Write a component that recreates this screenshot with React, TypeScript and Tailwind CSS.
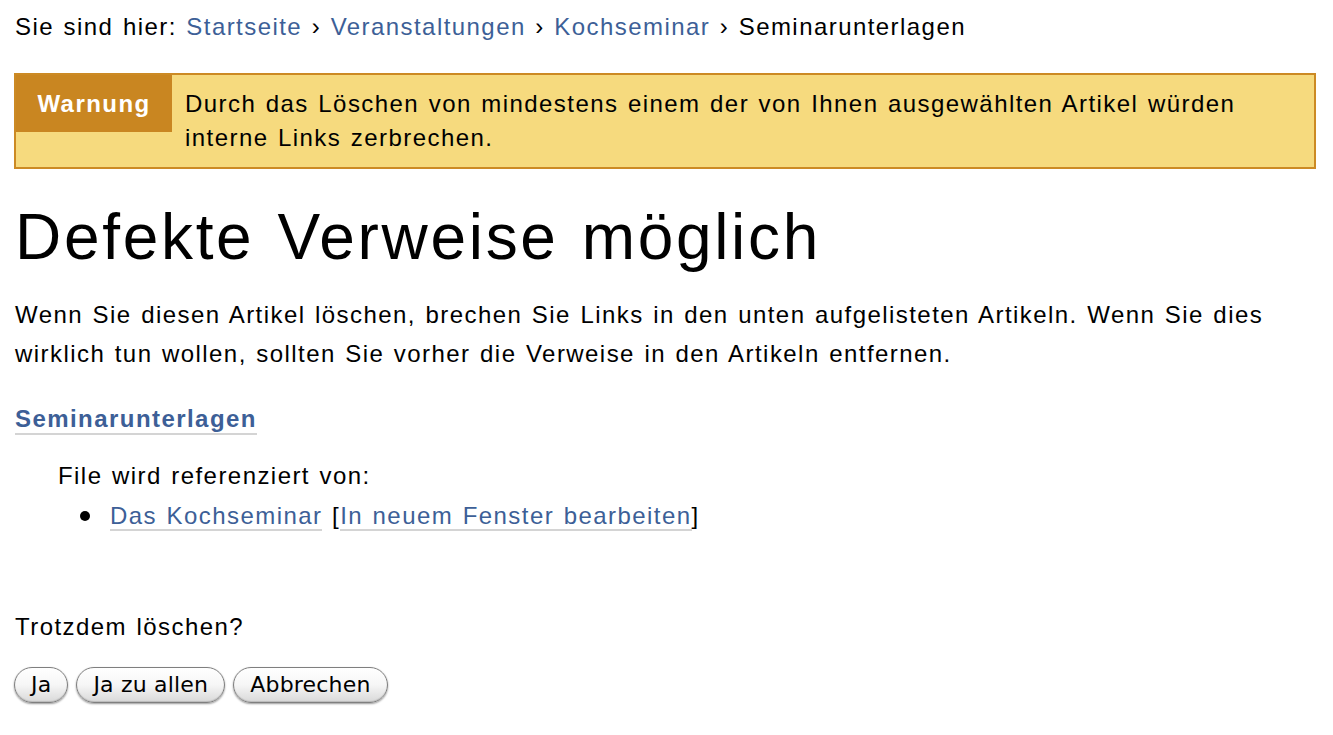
const Crumb = ({ children }: { children: React.ReactNode }) => (
  <a href="#" className="text-[#3d5f97] no-underline">
    {children}
  </a>
);

const Btn = ({ label }: { label: string }) => (
  <button
    type="button"
    className="h-[36px] px-[16px] rounded-full border border-[#7f7f7f] bg-gradient-to-b from-white via-[#f6f6f6] to-[#d9d9d9] text-[22px] leading-none tracking-[0.2px] text-black shadow-[0_1px_2px_rgba(0,0,0,0.4),inset_0_-1px_1px_rgba(0,0,0,0.15)] font-['DejaVu_Sans',sans-serif]"
  >
    {label}
  </button>
);

export default function App() {
  return (
    <div className="min-h-[735px] bg-white px-[15px] pt-[10px] text-[24px] text-black tracking-[0.06em] [word-spacing:0.06em] font-['Liberation_Sans',Arial,sans-serif]">
      <div className="leading-[34px]">
        Sie sind hier: <Crumb>Startseite</Crumb> › <Crumb>Veranstaltungen</Crumb> ›{" "}
        <Crumb>Kochseminar</Crumb> › Seminarunterlagen
      </div>

      <div className="mt-[29px] ml-[-1px] mr-[2px] flex border-2 border-[#cc8a24] bg-[#f6da7e]">
        <div className="h-[57px] w-[156px] shrink-0 bg-[#c98621] flex items-center justify-center font-bold text-white text-[24px]">
          Warnung
        </div>
        <p className="pl-[13px] pr-4 pt-[12px] pb-[12px] leading-[34px]">
          Durch das Löschen von mindestens einem der von Ihnen ausgewählten Artikel würden
          interne Links zerbrechen.
        </p>
      </div>

      <h1 className="mt-[30px] text-[64px] leading-[76px] font-normal tracking-[0.042em] [word-spacing:0.04em]">
        Defekte Verweise möglich
      </h1>

      <p className="mt-[20px] leading-[39px]">
        Wenn Sie diesen Artikel löschen, brechen Sie Links in den unten aufgelisteten Artikeln. Wenn Sie
        dies wirklich tun wollen, sollten Sie vorher die Verweise in den Artikeln entfernen.
      </p>

      <h2 className="mt-[29px] font-bold leading-[34px]">
        <a href="#" className="text-[#3d5f97] border-b-2 border-[#d4d4d4] pb-[1px]">
          Seminarunterlagen
        </a>
      </h2>

      <div className="mt-[20px] pl-[43px] leading-[40px]">
        <div>File wird referenziert von:</div>
        <ul className="pl-[22px]">
          <li className="flex items-center">
            <span className="w-[10px] h-[10px] rounded-full bg-black shrink-0 mr-[20px]" />
            <span>
              <a href="#" className="text-[#3d5f97] border-b-2 border-[#d4d4d4]">
                Das Kochseminar
              </a>{" "}
              [
              <a href="#" className="text-[#3d5f97] border-b-2 border-[#d4d4d4]">
                In neuem Fenster bearbeiten
              </a>
              ]
            </span>
          </li>
        </ul>
      </div>

      <p className="mt-[71px] leading-[40px]">Trotzdem löschen?</p>

      <div className="mt-[20px] flex gap-[8px] -ml-[1px] tracking-normal [word-spacing:normal]">
        <Btn label="Ja" />
        <Btn label="Ja zu allen" />
        <Btn label="Abbrechen" />
      </div>
    </div>
  );
}
